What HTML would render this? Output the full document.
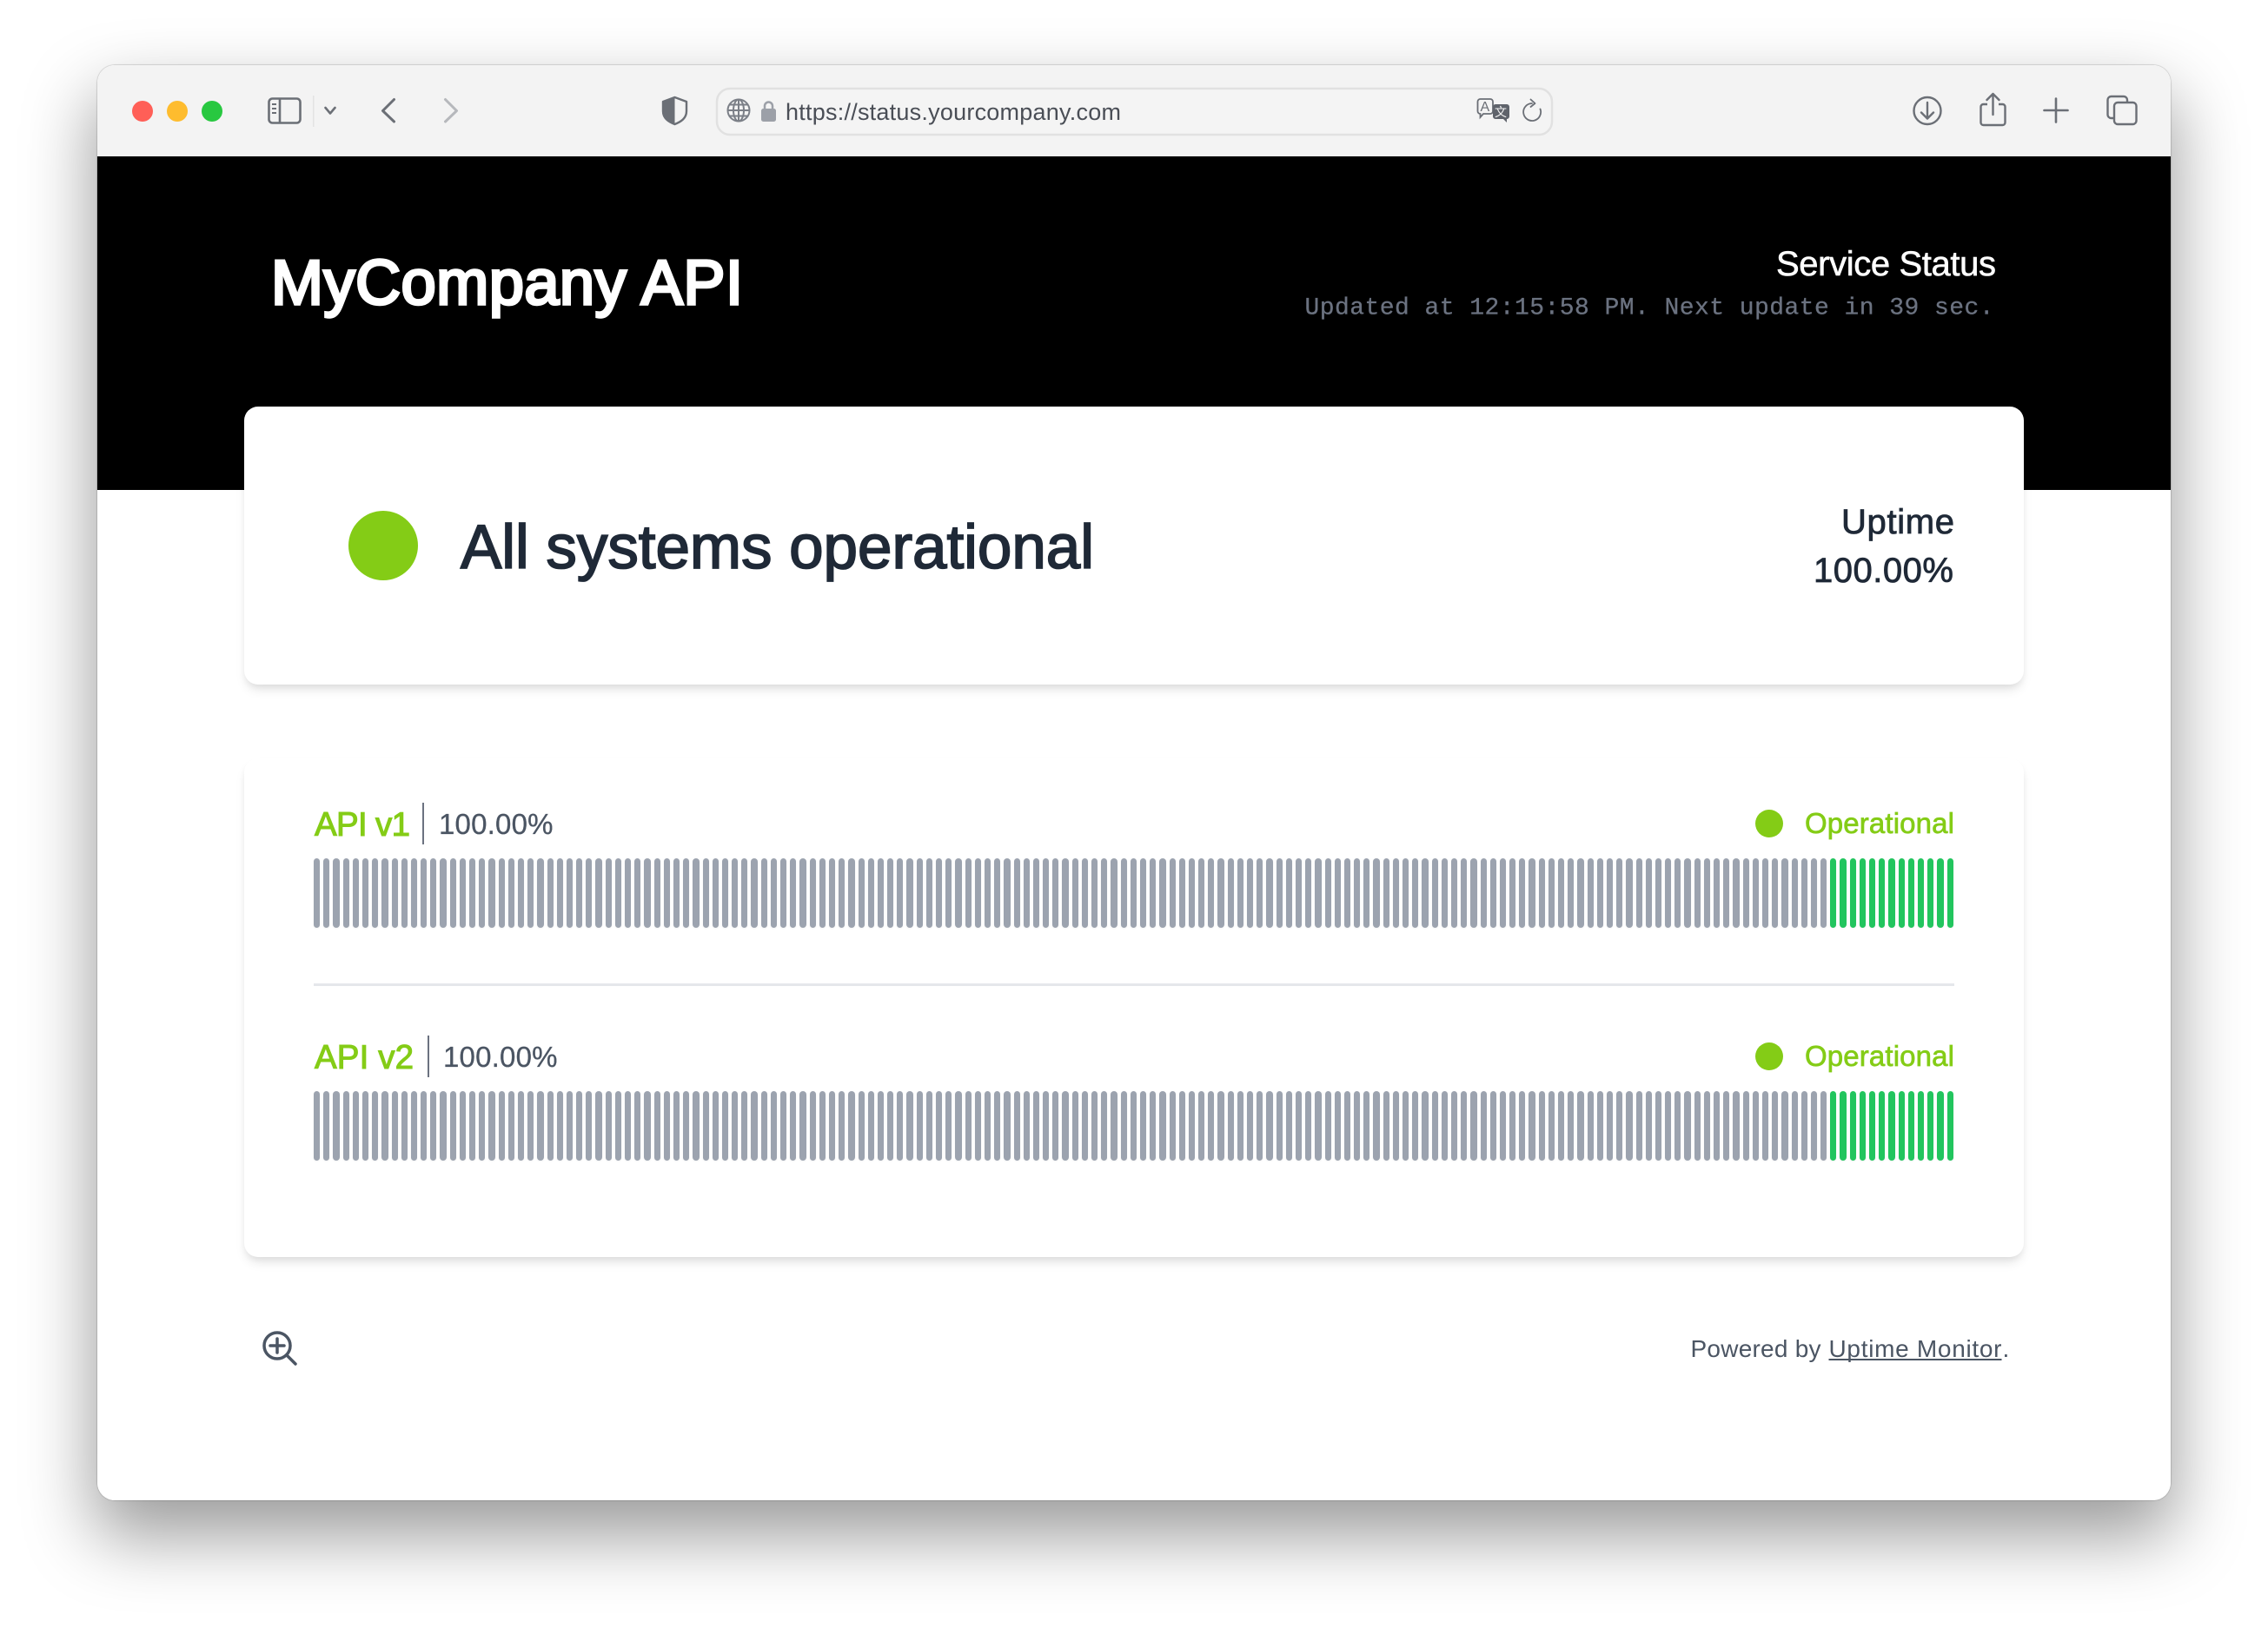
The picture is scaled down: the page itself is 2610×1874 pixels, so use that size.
<!DOCTYPE html>
<html lang="en">
<head>
<meta charset="utf-8">
<title>MyCompany API</title>
<style>
html,body{margin:0;padding:0;width:2610px;height:1874px;background:#fff;overflow:hidden}
#shadow{position:absolute;left:112px;top:75px;width:2386px;height:1652px;border-radius:20px;box-shadow:0 38px 80px 4px rgba(0,0,0,.39),0 0 1.500px 0 rgba(0,0,0,.5)}
#win{position:absolute;left:112px;top:75px;width:2386px;height:1652px;border-radius:20px;overflow:hidden;background:#fff}
#bar{position:absolute;left:0;top:0;width:100%;height:105px;background:#f3f3f3}
#hero{position:absolute;left:0;top:105px;width:100%;height:384px;background:#000}
.card{position:absolute;background:#fff;border-radius:16px;box-shadow:0 8px 12px -2px rgba(0,0,0,.1),0 4px 8px -2px rgba(0,0,0,.06)}
.dot{position:absolute;border-radius:50%;background:#84cc16}
.bars{position:absolute;left:361px;width:1888px;height:80px;display:flex;justify-content:space-between}
.bars i,.bars b{display:block;width:7.2px;height:80px;border-radius:4px;background:#9ca3af;box-shadow:0 1px 2px rgba(0,0,0,.05)}
.bars b{background:#22c55e}
.ln{position:absolute;background:#6b7280}
svg{position:absolute;left:0;top:0}
text{font-family:"Liberation Sans",sans-serif}
</style>
</head>
<body>
<div id="shadow"></div>
<div id="win">
<div id="bar"></div>
<div id="hero"></div>
</div>
<div class="card" style="left:281px;top:468px;width:2048px;height:320px"></div>
<div class="card" style="left:281px;top:873px;width:2048px;height:574px"></div>
<div class="dot" style="left:401px;top:588px;width:80px;height:80px"></div>
<div class="dot" style="left:2020px;top:932px;width:32px;height:32px"></div>
<div class="dot" style="left:2020px;top:1200px;width:32px;height:32px"></div>
<div class="ln" style="left:486px;top:924px;width:2px;height:48px"></div>
<div class="ln" style="left:492px;top:1192px;width:2px;height:48px"></div>
<div class="ln" style="left:361px;top:1132px;width:1888px;height:3px;background:#e5e7eb"></div>
<div class="bars" style="top:988px">
<i></i><i></i><i></i><i></i><i></i><i></i><i></i><i></i><i></i><i></i>
<i></i><i></i><i></i><i></i><i></i><i></i><i></i><i></i><i></i><i></i>
<i></i><i></i><i></i><i></i><i></i><i></i><i></i><i></i><i></i><i></i>
<i></i><i></i><i></i><i></i><i></i><i></i><i></i><i></i><i></i><i></i>
<i></i><i></i><i></i><i></i><i></i><i></i><i></i><i></i><i></i><i></i>
<i></i><i></i><i></i><i></i><i></i><i></i><i></i><i></i><i></i><i></i>
<i></i><i></i><i></i><i></i><i></i><i></i><i></i><i></i><i></i><i></i>
<i></i><i></i><i></i><i></i><i></i><i></i><i></i><i></i><i></i><i></i>
<i></i><i></i><i></i><i></i><i></i><i></i><i></i><i></i><i></i><i></i>
<i></i><i></i><i></i><i></i><i></i><i></i><i></i><i></i><i></i><i></i>
<i></i><i></i><i></i><i></i><i></i><i></i><i></i><i></i><i></i><i></i>
<i></i><i></i><i></i><i></i><i></i><i></i><i></i><i></i><i></i><i></i>
<i></i><i></i><i></i><i></i><i></i><i></i><i></i><i></i><i></i><i></i>
<i></i><i></i><i></i><i></i><i></i><i></i><i></i><i></i><i></i><i></i>
<i></i><i></i><i></i><i></i><i></i><i></i><i></i><i></i><i></i><i></i>
<i></i><i></i><i></i><i></i><i></i><i></i>
<b></b><b></b><b></b><b></b><b></b><b></b><b></b><b></b><b></b><b></b><b></b><b></b><b></b>
</div>
<div class="bars" style="top:1256px">
<i></i><i></i><i></i><i></i><i></i><i></i><i></i><i></i><i></i><i></i>
<i></i><i></i><i></i><i></i><i></i><i></i><i></i><i></i><i></i><i></i>
<i></i><i></i><i></i><i></i><i></i><i></i><i></i><i></i><i></i><i></i>
<i></i><i></i><i></i><i></i><i></i><i></i><i></i><i></i><i></i><i></i>
<i></i><i></i><i></i><i></i><i></i><i></i><i></i><i></i><i></i><i></i>
<i></i><i></i><i></i><i></i><i></i><i></i><i></i><i></i><i></i><i></i>
<i></i><i></i><i></i><i></i><i></i><i></i><i></i><i></i><i></i><i></i>
<i></i><i></i><i></i><i></i><i></i><i></i><i></i><i></i><i></i><i></i>
<i></i><i></i><i></i><i></i><i></i><i></i><i></i><i></i><i></i><i></i>
<i></i><i></i><i></i><i></i><i></i><i></i><i></i><i></i><i></i><i></i>
<i></i><i></i><i></i><i></i><i></i><i></i><i></i><i></i><i></i><i></i>
<i></i><i></i><i></i><i></i><i></i><i></i><i></i><i></i><i></i><i></i>
<i></i><i></i><i></i><i></i><i></i><i></i><i></i><i></i><i></i><i></i>
<i></i><i></i><i></i><i></i><i></i><i></i><i></i><i></i><i></i><i></i>
<i></i><i></i><i></i><i></i><i></i><i></i><i></i><i></i><i></i><i></i>
<i></i><i></i><i></i><i></i><i></i><i></i>
<b></b><b></b><b></b><b></b><b></b><b></b><b></b><b></b><b></b><b></b><b></b><b></b><b></b>
</div>
<svg width="2610" height="1874" viewBox="0 0 2610 1874" xmlns="http://www.w3.org/2000/svg">
<!-- traffic lights -->
<circle cx="164" cy="128" r="12" fill="#ff5f57"/>
<circle cx="204" cy="128" r="12" fill="#febc2e"/>
<circle cx="244" cy="128" r="12" fill="#28c840"/>
<!-- sidebar icon -->
<g fill="none" stroke="#6b6f76" stroke-width="2.6">
<rect x="309.5" y="113.5" width="36" height="28" rx="4"/>
<path d="M322 113.500V141.500"/>
</g>
<path d="M313 120h5M313 125h5M313 130h5" stroke="#6b6f76" stroke-width="2"/>
<rect x="360" y="110" width="1.500" height="36" fill="#e3e3e3"/>
<path d="M374.500 124l5.500 6.500 5.500-6.500" fill="none" stroke="#6b6f76" stroke-width="2.600" stroke-linecap="round" stroke-linejoin="round"/>
<path d="M453.500 114.500L440.500 127.500L453.500 140" fill="none" stroke="#6b6f76" stroke-width="3" stroke-linecap="round" stroke-linejoin="round"/>
<path d="M512.500 114.500L525.500 127.500L512.500 140" fill="none" stroke="#b6b8bc" stroke-width="3" stroke-linecap="round" stroke-linejoin="round"/>
<!-- shield -->
<path d="M776.500 112L790 117V128C790 136 784 140 776.500 143C769 140 763 136 763 128V117Z" fill="none" stroke="#6b6f76" stroke-width="2.400" stroke-linejoin="round"/>
<path d="M776.500 112V143C769 140 763 136 763 128V117Z" fill="#6b6f76"/>
<!-- url field -->
<rect x="825" y="102" width="961" height="53" rx="15" fill="#f4f4f4" stroke="#e1e1e1" stroke-width="2.500"/>
<g fill="none" stroke="#7b7f87" stroke-width="2">
<circle cx="850" cy="127" r="12.500"/>
<ellipse cx="850" cy="127" rx="6" ry="12.500"/>
<path d="M850 114.500V139.500M837.500 127H862.500M839.500 120.500H860.500M839.500 133.500H860.500"/>
</g>
<path d="M880 126v-4a4.500 4.500 0 0 1 9 0v4" fill="none" stroke="#9ca0a8" stroke-width="2.500"/>
<rect x="876" y="125" width="17" height="15" rx="2.500" fill="#9ca0a8"/>
<text x="904" y="138" font-size="27" fill="#4a4e56" textLength="386">https://status.yourcompany.com</text>
<!-- translate -->
<path d="M1704 114h11a3 3 0 0 1 3 3v11a3 3 0 0 1-3 3h-8l-3.500 4v-4a3 3 0 0 1-3-3v-11a3 3 0 0 1 3-3z" fill="#f4f4f4" stroke="#6b6f76" stroke-width="1.800"/>
<text x="1703.500" y="128" font-size="16" fill="#6b6f76">A</text>
<path d="M1721 120h13a3 3 0 0 1 3 3v11a3 3 0 0 1-3 3v4l-4-4h-9a3 3 0 0 1-3-3v-11a3 3 0 0 1 3-3z" fill="#5f636b"/>
<text x="1720" y="134" font-size="14" fill="#f4f4f4" style="font-family:'Liberation Sans','Noto Sans CJK SC',sans-serif">文</text>
<!-- reload -->
<path d="M1763 119a10 10 0 1 0 9.500 6.500" fill="none" stroke="#6b6f76" stroke-width="1.800" stroke-linecap="round"/>
<path d="M1761.500 114.500l5 4.500-5 4" fill="none" stroke="#6b6f76" stroke-width="1.800" stroke-linecap="round" stroke-linejoin="round"/>
<!-- download -->
<circle cx="2218" cy="127.500" r="15.500" fill="none" stroke="#6b6f76" stroke-width="2.400"/>
<path d="M2218 118V136M2211 129.500L2218 136.500L2225 129.500" fill="none" stroke="#6b6f76" stroke-width="2.400" stroke-linecap="round" stroke-linejoin="round"/>
<!-- share -->
<path d="M2287 120h-4.500a3 3 0 0 0-3 3v18a3 3 0 0 0 3 3h22a3 3 0 0 0 3-3v-18a3 3 0 0 0-3-3H2300" fill="none" stroke="#6b6f76" stroke-width="2.400"/>
<path d="M2293.500 132V108M2286.500 115L2293.500 108L2300.500 115" fill="none" stroke="#6b6f76" stroke-width="2.400" stroke-linecap="round" stroke-linejoin="round"/>
<!-- plus -->
<path d="M2366 113.500V140.500M2352.500 127H2379.500" stroke="#6b6f76" stroke-width="2.600" stroke-linecap="round"/>
<!-- tabs -->
<path d="M2432 136h-2.500a4 4 0 0 1-4-4v-17a4 4 0 0 1 4-4h14.500a4 4 0 0 1 4 4v3" fill="none" stroke="#6b6f76" stroke-width="2.400"/>
<rect x="2433" y="118" width="25.500" height="25" rx="4" fill="#f3f3f3" stroke="#6b6f76" stroke-width="2.400"/>
<!-- hero text -->
<text x="312" y="350" font-size="72" fill="#fff" stroke="#fff" stroke-width="3.400" textLength="543">MyCompany API</text>
<text x="2044" y="317" font-size="40" fill="#fff" stroke="#fff" stroke-width=".6" textLength="253">Service Status</text>
<text x="1501.500" y="361.500" font-size="28" fill="#6b7280" stroke="#6b7280" stroke-width=".3" style="font-family:'Liberation Mono',monospace" textLength="793">Updated at 12:15:58 PM. Next update in 39 sec.</text>
<!-- overall -->
<text x="530" y="654" font-size="71" fill="#1f2937" stroke="#1f2937" stroke-width="1.800" textLength="729">All systems operational</text>
<text x="2119" y="614" font-size="40" fill="#1f2937" stroke="#1f2937" stroke-width=".8" textLength="130">Uptime</text>
<text x="2087" y="670" font-size="40" fill="#1f2937" stroke="#1f2937" stroke-width=".8" textLength="161">100.00%</text>
<!-- rows -->
<text x="362" y="962" font-size="38.500" fill="#84cc16" stroke="#84cc16" stroke-width="1.100" textLength="110">API v1</text>
<text x="505" y="960" font-size="33" fill="#4b5563" stroke="#4b5563" stroke-width=".3" textLength="131.500">100.00%</text>
<text x="2077" y="959" font-size="33" fill="#84cc16" stroke="#84cc16" stroke-width=".7" textLength="172">Operational</text>
<text x="362" y="1230" font-size="38.500" fill="#84cc16" stroke="#84cc16" stroke-width="1.100" textLength="114">API v2</text>
<text x="510" y="1228" font-size="33" fill="#4b5563" stroke="#4b5563" stroke-width=".3" textLength="131.500">100.00%</text>
<text x="2077" y="1227" font-size="33" fill="#84cc16" stroke="#84cc16" stroke-width=".7" textLength="172">Operational</text>
<!-- footer -->
<circle cx="319" cy="1549" r="15" fill="none" stroke="#4b5563" stroke-width="3.500"/>
<path d="M311 1549H327M319 1541V1557M330 1560L340 1570" fill="none" stroke="#4b5563" stroke-width="3.500" stroke-linecap="round"/>
<text x="1945.500" y="1562" font-size="28" fill="#4b5563" textLength="150">Powered by</text>
<text x="2104.500" y="1562" font-size="28" fill="#4b5563" textLength="199">Uptime Monitor</text>
<text x="2304.500" y="1562" font-size="28" fill="#4b5563">.</text>
<rect x="2104.500" y="1564" width="199" height="2" fill="#4b5563"/>
</svg>
</body>
</html>
